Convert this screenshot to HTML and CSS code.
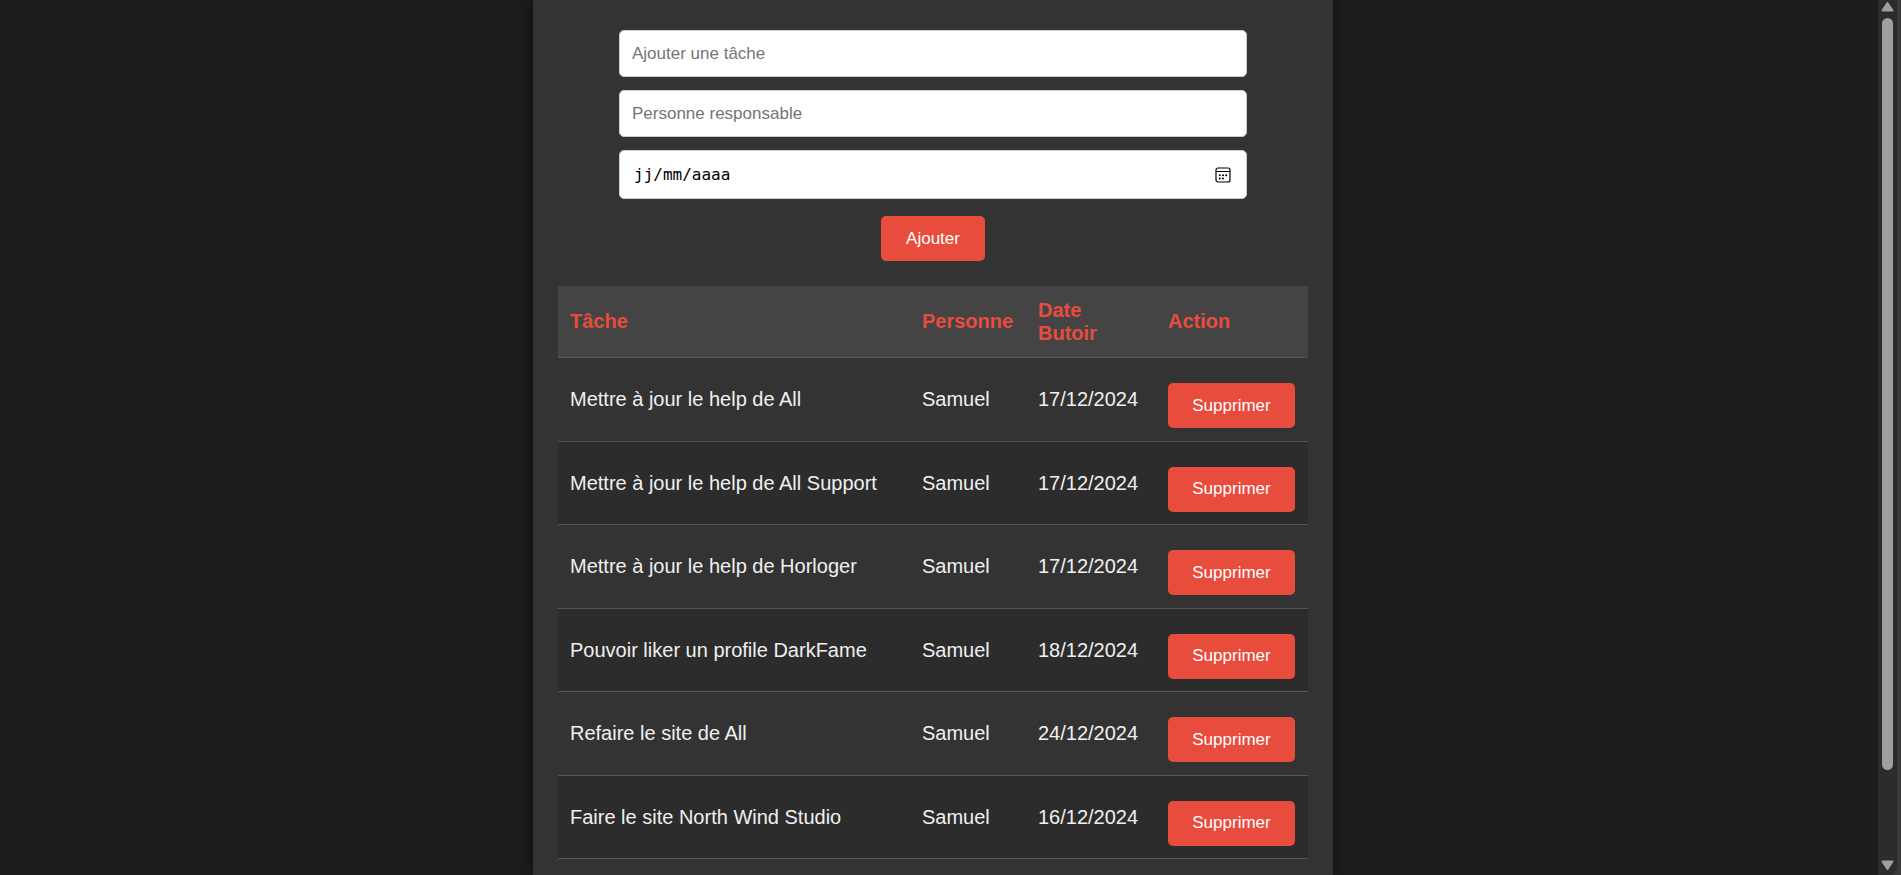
FILE: index.html
```html
<!DOCTYPE html>
<html lang="fr">
<head>
<meta charset="utf-8">
<title>Liste des tâches</title>
<link rel="stylesheet" href="styles.css">
</head>
<body>
<main class="page">
  <section class="container">
    <form class="task-form">
      <input class="field" type="text" placeholder="Ajouter une tâche" aria-label="Ajouter une tâche">
      <input class="field" type="text" placeholder="Personne responsable" aria-label="Personne responsable">
      <div class="date-field">
        <input class="field field-date" type="text" inputmode="numeric" placeholder="jj/mm/aaaa" aria-label="Date butoir">
        <button class="picker" type="button" aria-label="Ouvrir le calendrier">
          <svg width="16" height="16" viewBox="0 0 16 16" fill="none" stroke="#000" aria-hidden="true">
            <rect x="1" y="1" width="14" height="14" rx="2" stroke-width="1.2"/>
            <path d="M1 4.500h14" stroke-width="1"/>
            <g fill="#000" stroke="none">
              <circle cx="4.800" cy="8.200" r="1"/><circle cx="8" cy="8.200" r="1"/><circle cx="11.200" cy="8.200" r="1"/>
              <circle cx="4.800" cy="11.400" r="1"/><circle cx="8" cy="11.400" r="1"/>
            </g>
          </svg>
        </button>
      </div>
      <button class="btn" type="submit">Ajouter</button>
    </form>
    <table class="tasks">
      <colgroup><col class="col-task"><col class="col-person"><col class="col-date"><col class="col-action"></colgroup>
      <thead>
        <tr><th scope="col">Tâche</th><th scope="col">Personne</th><th scope="col">Date Butoir</th><th scope="col">Action</th></tr>
      </thead>
      <tbody>
        <tr><td>Mettre à jour le help de All</td><td>Samuel</td><td>17/12/2024</td><td><button class="btn" type="button">Supprimer</button></td></tr>
        <tr><td>Mettre à jour le help de All Support</td><td>Samuel</td><td>17/12/2024</td><td><button class="btn" type="button">Supprimer</button></td></tr>
        <tr><td>Mettre à jour le help de Horloger</td><td>Samuel</td><td>17/12/2024</td><td><button class="btn" type="button">Supprimer</button></td></tr>
        <tr><td>Pouvoir liker un profile DarkFame</td><td>Samuel</td><td>18/12/2024</td><td><button class="btn" type="button">Supprimer</button></td></tr>
        <tr><td>Refaire le site de All</td><td>Samuel</td><td>24/12/2024</td><td><button class="btn" type="button">Supprimer</button></td></tr>
        <tr><td>Faire le site North Wind Studio</td><td>Samuel</td><td>16/12/2024</td><td><button class="btn" type="button">Supprimer</button></td></tr>
      </tbody>
    </table>
  </section>
</main>
<div class="scrollbar" aria-hidden="true">
  <div class="track">
    <svg class="arrow" width="13" height="11" viewBox="0 0 13 11"><path d="M6.5 2 11.5 9.500H1.500z" fill="#9f9f9f" stroke="#9f9f9f" stroke-width="2" stroke-linejoin="round"/></svg>
    <div class="rail"><div class="thumb"></div></div>
    <svg class="arrow" width="13" height="11" viewBox="0 0 13 11"><path d="M6.5 9 11.5 1.500H1.500z" fill="#9f9f9f" stroke="#9f9f9f" stroke-width="2" stroke-linejoin="round"/></svg>
  </div>
</div>
</body>
</html>
```
FILE: styles.css
```css
* { box-sizing: border-box; }

body {
  margin: 0;
  height: 100vh;
  display: flex;
  overflow: hidden;
  background: #1c1c1c;
  color: #f0f0f0;
  font: 20px/23px "Liberation Sans", Arial, sans-serif;
}

.page {
  flex: 1;
  display: flex;
  justify-content: center;
  padding-right: 12px;
}

.container {
  width: 100%;
  max-width: 800px;
  min-height: 100vh;
  padding: 30px 25px 25px;
  background: #333;
  box-shadow: 0 0 12px rgba(0, 0, 0, 0.5);
}

.task-form {
  display: flex;
  flex-direction: column;
  align-items: center;
  gap: 13px;
  margin-bottom: 25px;
}

.field {
  width: 628px;
  max-width: 100%;
  height: 47px;
  padding: 0 12px;
  border: 1px solid #ccc;
  border-radius: 5px;
  background: #fff;
  color: #000;
  font-family: inherit;
  font-size: 17px;
}

.field::placeholder { color: #757575; opacity: 1; }

.date-field {
  position: relative;
  width: 628px;
  max-width: 100%;
}

.field-date {
  display: block;
  width: 100%;
  height: 49px;
  padding: 0 14px;
  font-family: "DejaVu Sans Mono", monospace;
  font-size: 16px;
}

.field-date::placeholder { color: #000; }

.picker {
  position: absolute;
  top: 0;
  right: 16px;
  height: 100%;
  padding: 0;
  border: 0;
  background: none;
  display: flex;
  align-items: center;
}

.btn {
  height: 45px;
  padding: 0 25px;
  border: 0;
  border-radius: 5px;
  background: #e74c3c;
  color: #fff;
  font-family: inherit;
  font-size: 17px;
  cursor: pointer;
}

.task-form .btn { margin-top: 4px; }

.tasks {
  width: 100%;
  table-layout: fixed;
  border-spacing: 0;
}

.col-person { width: 116px; }
.col-date { width: 130px; }
.col-action { width: 152px; }

.tasks th,
.tasks td {
  padding: 12px 13px 12px 12px;
  border-bottom: 1px solid #555;
  text-align: left;
  vertical-align: middle;
}

.tasks th {
  height: 72px;
  background: #444;
  color: #e74c3c;
}

.tasks td { height: 84px; }
.tasks tr:nth-child(even) td { height: 83px; background: #2c2c2c; }

.tasks .btn {
  display: block;
  width: 100%;
  padding: 0;
  margin-top: 12px;
}

.scrollbar {
  width: 23px;
  background: #3a3a3a;
}

.track {
  width: 19px;
  height: 100%;
  display: flex;
  flex-direction: column;
  align-items: center;
  padding: 1px 0 4px;
  border-bottom-right-radius: 8px;
  background: #2c2c2c;
}

.arrow { flex: none; }

.rail {
  flex: 1;
  padding: 6px 0;
}

.thumb {
  width: 11px;
  height: 90%;
  border-radius: 6px;
  background: #9f9f9f;
}
```
